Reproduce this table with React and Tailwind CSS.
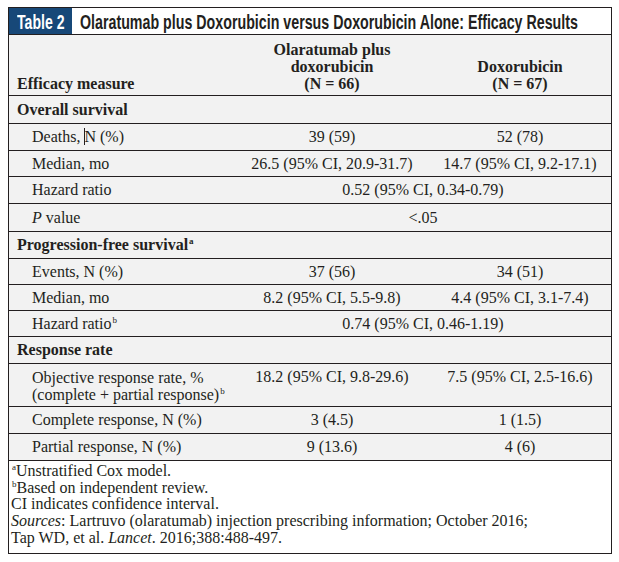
import React from 'react'

// ── Efficacy table rows ──
const rows = [
  { type: 'section', label: 'Overall survival', h: 'h-[28px]' },
  { type: 'row', label: 'Deaths, N (%)', caret: true, a: '39 (59)', b: '52 (78)', h: 'h-[27px]' },
  { type: 'row', label: 'Median, mo', a: '26.5 (95% CI, 20.9-31.7)', b: '14.7 (95% CI, 9.2-17.1)', h: 'h-[26px]' },
  { type: 'row', label: 'Hazard ratio', span: '0.52 (95% CI, 0.34-0.79)', h: 'h-[27px]' },
  { type: 'row', label: 'value', italicP: true, span: '<.05', h: 'h-[28px]' },
  { type: 'section', label: 'Progression-free survival', sup: 'a', h: 'h-[27px]' },
  { type: 'row', label: 'Events, N (%)', a: '37 (56)', b: '34 (51)', h: 'h-[26px]' },
  { type: 'row', label: 'Median, mo', a: '8.2 (95% CI, 5.5-9.8)', b: '4.4 (95% CI, 3.1-7.4)', h: 'h-[26px]' },
  { type: 'row', label: 'Hazard ratio', sup: 'b', span: '0.74 (95% CI, 0.46-1.19)', h: 'h-[26px]' },
  { type: 'section', label: 'Response rate', h: 'h-[27px]' },
  { type: 'double', a: '18.2 (95% CI, 9.8-29.6)', b: '7.5 (95% CI, 2.5-16.6)', h: 'h-[43px]' },
  { type: 'row', label: 'Complete response, N (%)', a: '3 (4.5)', b: '1 (1.5)', h: 'h-[27px]' },
  { type: 'row', label: 'Partial response, N (%)', a: '9 (13.6)', b: '4 (6)', h: 'h-[27px]' },
]

const Sup = ({ children }) => (
  <sup className="text-[9px] relative -top-[6px] ml-[1px]">{children}</sup>
)

const Row = ({ r }) => {
  const base = `grid grid-cols-[226px_194px_182px] border-b border-[#231f20] ${r.h}`
  if (r.type === 'section') {
    return (
      <div className={base}>
        <div className="col-span-3 flex items-center pl-[8px] font-bold">
          <span>{r.label}{r.sup && <Sup>{r.sup}</Sup>}</span>
        </div>
      </div>
    )
  }
  if (r.type === 'double') {
    return (
      <div className={base}>
        <div className="flex items-center pl-[23px] leading-[17px] pt-[1px]">
          <span>Objective response rate, %<br />(complete + partial response)<Sup>b</Sup></span>
        </div>
        <div className="flex justify-center pt-[3px] leading-[20px] whitespace-nowrap">{r.a}</div>
        <div className="flex justify-center pt-[3px] leading-[20px] whitespace-nowrap">{r.b}</div>
      </div>
    )
  }
  return (
    <div className={base}>
      <div className="flex items-center pl-[23px] whitespace-nowrap">
        {r.italicP ? (
          <span><i>P</i> {r.label}</span>
        ) : r.caret ? (
          <span>Deaths, <span className="inline-block w-[1px] h-[17px] bg-[#231f20] align-[-3px] mr-[-1px]" />N (%)</span>
        ) : (
          <span>{r.label}{r.sup && <Sup>{r.sup}</Sup>}</span>
        )}
      </div>
      {r.span ? (
        <div className="col-span-2 flex items-center justify-center whitespace-nowrap">{r.span}</div>
      ) : (
        <>
          <div className="flex items-center justify-center whitespace-nowrap">{r.a}</div>
          <div className="flex items-center justify-center whitespace-nowrap">{r.b}</div>
        </>
      )}
    </div>
  )
}

export default function App() {
  return (
    <div className="bg-white w-[619px] h-[562px] pt-[7px] pl-[8px] text-[#231f20]" style={{ fontFamily: '"Liberation Serif", serif' }}>
      <div className="w-[604px] border border-[#231f20] text-[16px]">
        {/* Title bar */}
        <div className="h-[27px] flex border-b border-[#231f20] bg-white" style={{ fontFamily: '"Liberation Sans", Arial, sans-serif' }}>
          <div className="w-[63px] bg-[#174878] flex items-center overflow-hidden">
            <span className="inline-block text-white font-bold text-[21px] leading-none scale-x-[0.67] origin-left pl-[12px] whitespace-nowrap">Table 2</span>
          </div>
          <div className="flex-1 flex items-center overflow-hidden pl-[8px]">
            <span className="inline-block font-bold text-[21px] leading-none text-[#231f20] scale-x-[0.678] origin-left whitespace-nowrap">
              Olaratumab plus Doxorubicin versus Doxorubicin Alone: Efficacy Results
            </span>
          </div>
        </div>

        {/* Column header */}
        <div className="h-[61px] grid grid-cols-[226px_194px_182px] border-b border-[#231f20] bg-[#f2f2f2] font-bold leading-[17px] pb-[3px]">
          <div className="flex items-end pl-[8px]">Efficacy measure</div>
          <div className="flex items-end justify-center text-center">Olaratumab plus<br />doxorubicin<br />(N = 66)</div>
          <div className="flex items-end justify-center text-center">Doxorubicin<br />(N = 67)</div>
        </div>

        {/* Body */}
        <div className="bg-[#f2f2f2]">
          {rows.map((r, i) => <Row key={i} r={r} />)}
        </div>

        {/* Footnotes */}
        <div className="h-[92px] bg-white pl-[2px] pt-[2px] text-[16px] leading-[16.7px]">
          <div><Sup>a</Sup>Unstratified Cox model.</div>
          <div><Sup>b</Sup>Based on independent review.</div>
          <div>CI indicates confidence interval.</div>
          <div><i>Sources</i>: Lartruvo (olaratumab) injection prescribing information; October 2016;</div>
          <div>Tap WD, et al. <i>Lancet</i>. 2016;388:488-497.</div>
        </div>
      </div>
    </div>
  )
}
